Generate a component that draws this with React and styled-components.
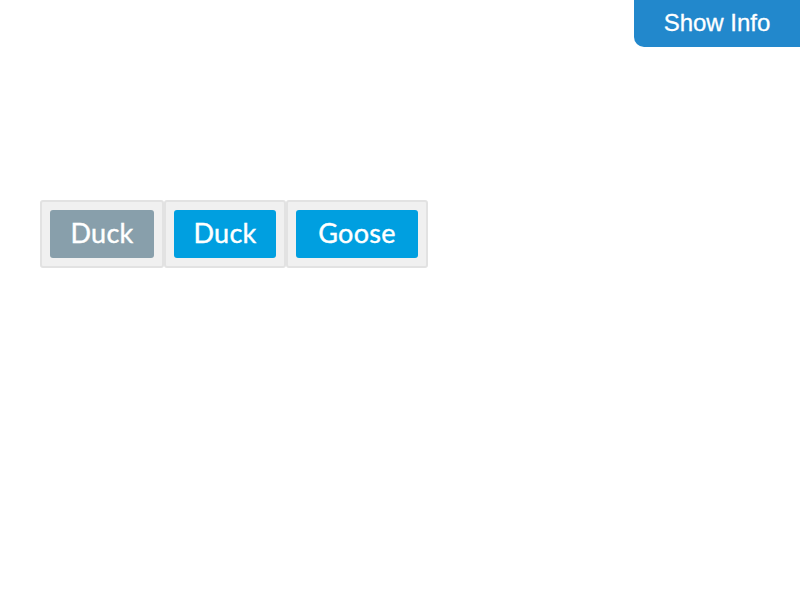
import React from "react";
import styled, { createGlobalStyle } from "styled-components";

const GlobalStyle = createGlobalStyle`
  body {
    margin: 0;
    background: #fff;
    font-family: "Lato", "Open Sans", sans-serif;
  }
`;

const Page = styled.div`
  position: relative;
  width: 800px;
  height: 600px;
  padding: 200px 40px 0;
  box-sizing: border-box;
`;

const InfoButton = styled.button`
  position: absolute;
  top: 0;
  right: 0;
  width: 166px;
  height: 47px;
  border: none;
  border-bottom-left-radius: 10px;
  background: #2288cc;
  color: #fff;
  font-family: "Liberation Sans", Arial, sans-serif;
  font-size: 24px;
  -webkit-text-stroke: 0.3px #fff;
  padding: 0 0 2px 0;
  cursor: pointer;
`;

const Row = styled.div`
  display: flex;
`;

const Cell = styled.div`
  background: #f0f0f0;
  border: 2px solid #e2e2e2;
  border-radius: 3px;
  padding: 8px;
`;

const Choice = styled.button`
  display: block;
  width: ${(p) => p.$width}px;
  height: 48px;
  border: none;
  border-radius: 3px;
  background: ${(p) => (p.$picked ? "#889fab" : "#009fe0")};
  color: #fff;
  font-family: "Lato", "Open Sans", sans-serif;
  font-size: 27px;
  letter-spacing: 0.3px;
  -webkit-text-stroke: 0.4px #fff;
  padding: 0 0 3px;
  cursor: pointer;
`;

const choices = [
  { label: "Duck", width: 104, picked: true },
  { label: "Duck", width: 102 },
  { label: "Goose", width: 122 },
];

export default function App() {
  return (
    <Page>
      <GlobalStyle />
      <InfoButton>Show Info</InfoButton>
      <Row>
        {choices.map((c, i) => (
          <Cell key={i}>
            <Choice $width={c.width} $picked={c.picked}>
              {c.label}
            </Choice>
          </Cell>
        ))}
      </Row>
    </Page>
  );
}
